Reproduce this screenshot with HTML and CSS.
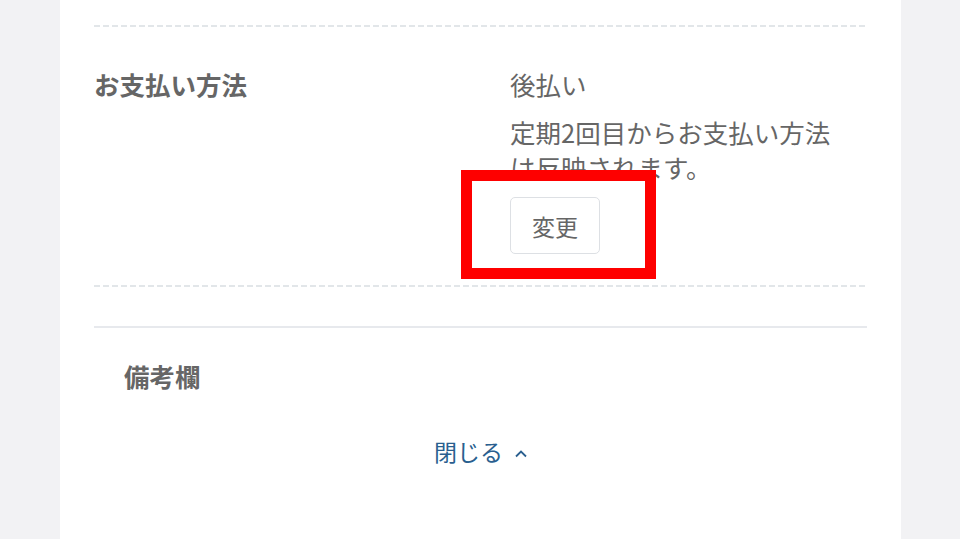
FILE: index.html
```
<!DOCTYPE html>
<html lang="ja">
<head>
	<title>お支払い方法</title>
	<meta charset="UTF-8">
	<meta name="viewport" content="width=device-width, initial-scale=1">
	<link rel="stylesheet" href="styles.css">
</head>
<body>
	<div class="card">
		<div class="row">
			<div class="row-label">お支払い方法</div>
			<div class="row-value">
				<p>後払い</p>
				<p class="note">定期2回目からお支払い方法は反映されます。</p>
				<button type="button" class="btn-change">変更</button>
			</div>
		</div>
		<div class="memo">
			<div class="memo-label">備考欄</div>
		</div>
		<div class="toggle">
			<a href="#" class="toggle-link">閉じる<svg width="12" height="8" viewBox="0 0 12 8"><polyline points="1,6.5 6,1.5 11,6.5" fill="none" stroke="#2a5f8f" stroke-width="1.8"/></svg></a>
		</div>
	</div>
	<div class="highlight"></div>
</body>
</html>
```

FILE: styles.css
```
html, body {
	height: 100%;
}
body {
	margin: 0;
	background: #f2f2f4;
	font-family: "Noto Sans CJK JP", "Noto Sans", sans-serif;
	color: #666;
	overflow: hidden;
}
.card {
	width: 841px;
	margin-left: 60px;
	min-height: 100%;
	background: #fff;
	padding: 25px 34px 0;
	box-sizing: border-box;
}
.row {
	display: flex;
	padding: 39px 0 31px;
	border-top: 2px solid transparent;
	border-bottom: 2px solid transparent;
	background:
		repeating-linear-gradient(to right, #e2e6e9 0 6px, transparent 6px 9px) top / 100% 2px no-repeat border-box,
		repeating-linear-gradient(to right, #e2e6e9 0 6px, transparent 6px 9px) bottom / 100% 2px no-repeat border-box;
	font-size: 25.5px;
	line-height: 35px;
}
.row-label {
	width: 416px;
	font-weight: bold;
}
.row-value {
	width: 335px;
}
.row-value p {
	margin: 0;
}
.row-value .note {
	margin-top: 13px;
}
.btn-change {
	margin-top: 13px;
	width: 90px;
	height: 57px;
	border: 1px solid #dde0e4;
	border-radius: 5px;
	background: #fff;
	color: #666;
	font-family: inherit;
	font-size: 23px;
	padding: 0;
	cursor: pointer;
}
.memo {
	margin-top: 39px;
	border-top: 2px solid #e7e9ed;
	padding: 30px 30px 0;
}
.memo-label {
	font-size: 25.5px;
	line-height: 35px;
	font-weight: bold;
}
.toggle {
	text-align: center;
	margin-top: 42px;
}
.toggle-link {
	color: #2a5f8f;
	text-decoration: none;
	font-size: 23px;
	line-height: 32px;
}
.toggle-link svg {
	margin-left: 12px;
	vertical-align: 3px;
}
.highlight {
	position: absolute;
	left: 461px;
	top: 170px;
	width: 173px;
	height: 87px;
	border: 11px solid #fe0000;
}
```
